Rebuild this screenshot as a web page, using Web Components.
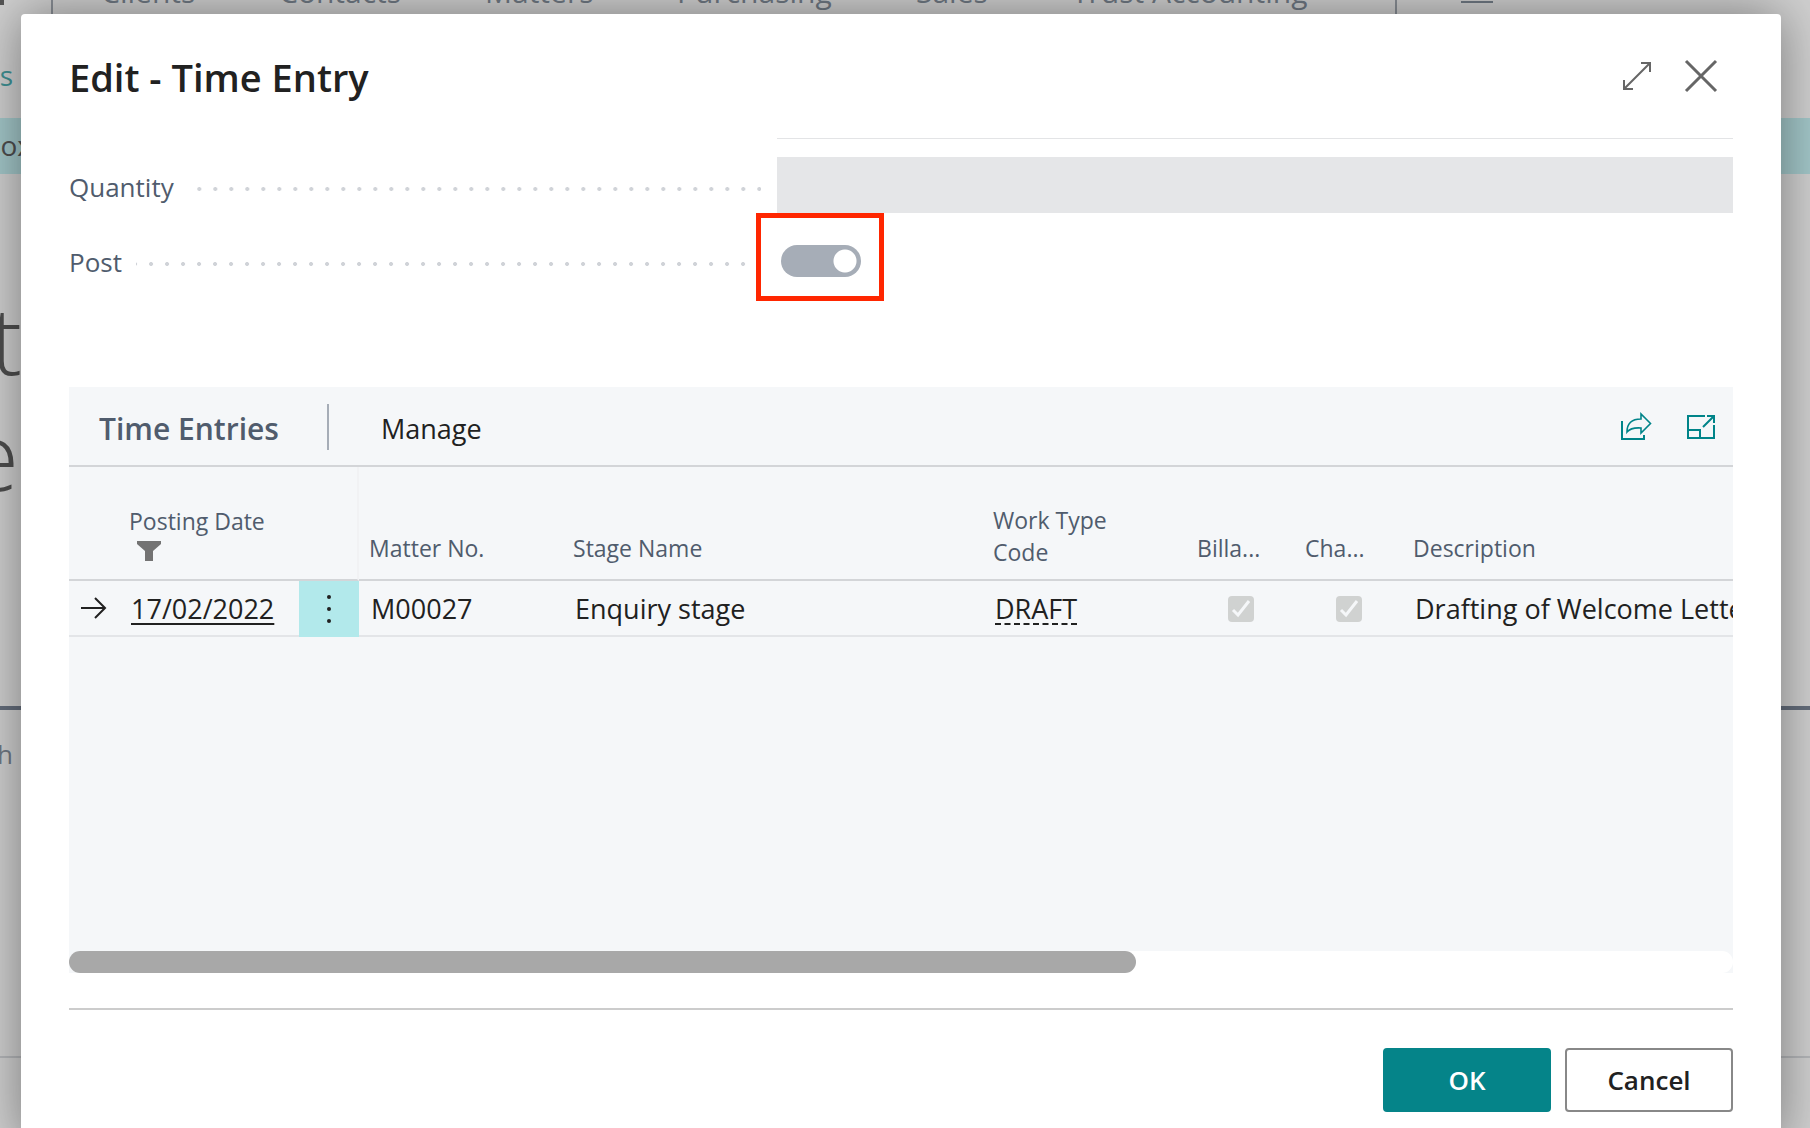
<!DOCTYPE html>
<html lang="en">
<head>
<meta charset="utf-8">
<title>Edit - Time Entry</title>
<style>
  html, body { height: 100%; }
  body {
    margin: 0;
    overflow: hidden;
    background: #d0d0d0;
    font-family: "Open Sans", "Noto Sans", sans-serif;
    font-size: 26px;
    line-height: 32px;
    color: #212121;
  }
</style>
</head>
<body>
<app-shell>
  <page-behind slot="page"></page-behind>
  <edit-dialog heading="Edit - Time Entry">
    <field-row label="Quantity" kind="text"></field-row>
    <field-row label="Post" kind="switch"></field-row>
    <time-entries slot="part"></time-entries>
    <dialog-button slot="actions" primary>OK</dialog-button>
    <dialog-button slot="actions">Cancel</dialog-button>
  </edit-dialog>
</app-shell>

<script>
const define = (name, html, setup) => {
  const template = document.createElement('template');
  template.innerHTML = html;
  customElements.define(name, class extends HTMLElement {
    constructor() {
      super();
      this.attachShadow({ mode: 'open' }).append(template.content.cloneNode(true));
    }
    connectedCallback() {
      if (setup) setup(this, this.shadowRoot);
    }
  });
};

define('app-shell', `
<style>
  :host { display: block; position: relative; height: 100vh; overflow: hidden; }
  .layer { position: absolute; inset: 0; padding: 14px 29px 0 21px; }
</style>
<slot name="page"></slot>
<div class="layer"><slot></slot></div>
`);

define('page-behind', `
<style>
  :host { display: flex; flex-direction: column; height: 100%; color: #4e4e4e; }
  nav { display: flex; height: 22px; align-items: flex-start; color: #6f7883; }
  nav .logo { width: 4px; height: 5px; background: #555; }
  nav .rule { width: 2px; height: 22px; background: #8a8f96; }
  nav .items { display: flex; margin: -24px 0 0 48px; font-size: 30px; }
  nav .logo + .rule { margin-left: 47px; }
  nav a { color: inherit; text-decoration: none; white-space: nowrap; }
  nav a:nth-child(1) { width: 178px; }
  nav a:nth-child(2) { width: 206px; }
  nav a:nth-child(3) { width: 192px; }
  nav a:nth-child(4) { width: 239px; }
  nav a:nth-child(5) { width: 156px; }
  nav a:nth-child(6) { width: 323px; }
  nav .menu { width: 32px; height: 2px; margin: 1px 0 0 64px; background: #6f7883; }
  .edge { display: flex; justify-content: flex-end; width: 13px; white-space: nowrap; }
  .link { box-sizing: border-box; height: 96px; padding-top: 32px; line-height: 42px; font-size: 28px; color: #3f9194; }
  .strip { height: 56px; background: #a3c7c9; }
  .strip .edge { width: 32px; line-height: 54px; font-size: 28px; }
  .hero { font-size: 94px; font-weight: 300; line-height: 116px; }
  .hero.first { margin-top: 107px; width: 22px; }
  .hero.second { width: 19px; }
  .bar { height: 4px; margin-top: 193px; background: #656e7c; }
  .cell { color: #6f7883; padding-top: 28px; }
  .line { height: 2px; margin-top: 286px; background: #b4b6b9; }
</style>
<nav>
  <span class="logo"></span><span class="rule"></span>
  <div class="items">
    <a href="#">Clients</a><a href="#">Contacts</a><a href="#">Matters</a><a href="#">Purchasing</a><a href="#">Sales</a><a href="#">Trust Accounting</a>
  </div>
  <span class="rule"></span><span class="menu"></span>
</nav>
<div class="edge link">s</div>
<div class="strip"><div class="edge">box</div></div>
<div class="edge hero first">t</div>
<div class="edge hero second">e</div>
<div class="bar"></div>
<div class="edge cell">h</div>
<div class="line"></div>
`);

define('edit-dialog', `
<style>
  :host {
    display: block; box-sizing: border-box; padding: 0 48px 32px;
    background: #fff; border-radius: 4px; box-shadow: 0 0 52px rgba(0,0,0,.43);
  }
  header { display: flex; align-items: center; justify-content: space-between; height: 124px; box-sizing: border-box; padding: 0 14px 0 0; }
  h1 { margin: 2px 0 0; font-size: 38px; line-height: 52px; font-weight: 600; }
  .tools { display: flex; gap: 28px; align-items: center; }
  button { display: block; padding: 0; border: 0; background: none; line-height: 0; }
  .clipped { display: grid; grid-template-columns: 177fr 239fr; }
  .clipped i { grid-column: 2; height: 1px; background: #e3e4e6; }
  .fields { display: flex; flex-direction: column; gap: 19px; padding: 18px 0 99px; }
  footer { display: flex; justify-content: flex-end; gap: 14px; margin-top: 35px; padding-top: 38px; border-top: 2px solid #ccc; }
</style>
<header>
  <h1></h1>
  <div class="tools">
    <button aria-label="Expand"><svg width="36" height="36" viewBox="0 0 36 36" fill="none" stroke="#666" stroke-width="2"><path d="M5 31 31 5M22 5h9v9M5 22v9h9"/></svg></button>
    <button aria-label="Close"><svg width="36" height="36" viewBox="0 0 36 36" fill="none" stroke="#666" stroke-width="3"><path d="M3 3 33 33M33 3 3 33"/></svg></button>
  </div>
</header>
<div class="clipped"><i></i></div>
<div class="fields"><slot></slot></div>
<slot name="part"></slot>
<footer><slot name="actions"></slot></footer>
`, (host, root) => { root.querySelector('h1').textContent = host.getAttribute('heading'); });

define('field-row', `
<style>
  :host { display: grid; grid-template-columns: 177fr 239fr; height: 56px; align-items: center; }
  .caption { display: flex; align-items: center; gap: 14px; padding-right: 16px; color: #505c6d; }
  label { padding-top: 4px; }
  .leader { flex: 1; height: 4px; margin-top: 8px; background: radial-gradient(circle at 14px 2px, #d0d3d8 1.6px, transparent 2.3px) right 0 top 0 / 16px 4px; }
  input { box-sizing: border-box; margin: 0; border: 0; border-radius: 0; font: inherit; }
  input[type=text] { display: block; width: 100%; height: 56px; padding: 0 12px; background: #e5e6e8; }
  .toggle { position: relative; width: 80px; height: 32px; margin: 2px 0 0 4px; }
  .toggle input { display: block; appearance: none; width: 80px; height: 32px; border-radius: 16px; background: radial-gradient(circle at 64px 16px, #fff 11px, transparent 12px) #a6adb7; }
  .marker { position: absolute; inset: -32px -23px -24px -25px; border: 5px solid #ff2600; pointer-events: none; }
</style>
<div class="caption"><label for="control"></label><span class="leader"></span></div>
<div class="control"></div>
`, (host, root) => {
  root.querySelector('label').textContent = host.getAttribute('label');
  root.querySelector('.control').innerHTML = host.getAttribute('kind') === 'switch'
    ? '<div class="toggle"><input id="control" type="checkbox" role="switch" checked><span class="marker"></span></div>'
    : '<input id="control" type="text" readonly>';
});

define('time-entries', `
<style>
  :host { display: block; background: #f5f7f9; font-size: 27px; }
  header { display: flex; align-items: center; height: 78px; padding: 0 15px 0 30px; border-bottom: 2px solid #d3d5d8; }
  h2 { margin: 6px 0 0; width: 228px; font-size: 30px; line-height: 36px; font-weight: 600; color: #505c6d; }
  .rule { width: 2px; height: 46px; margin-top: 2px; background: #a6adb7; }
  button { padding: 0; border: 0; background: none; font: inherit; color: inherit; }
  .manage { margin: 6px auto 0 52px; }
  .icons { display: flex; gap: 31px; margin-top: 2px; }
  .icons button { display: block; line-height: 0; }
  .scroll { overflow: hidden; height: 484px; }
  table { width: 100%; table-layout: fixed; border-collapse: separate; border-spacing: 0; }
  th, td { padding: 0; box-sizing: border-box; text-align: left; font-weight: 400; white-space: nowrap; }
  th { height: 114px; padding: 0 10px 15px; vertical-align: bottom; border-bottom: 2px solid #d3d5d8; font-size: 23px; color: #505c6d; }
  th.two { padding-bottom: 11px; white-space: normal; }
  th.cut { overflow: hidden; text-overflow: ellipsis; }
  th.first { padding: 0 0 18px 60px; border-right: 2px solid #f1f2f4; }
  th.first svg { display: block; margin: 4px 0 0 8px; }
  td { height: 56px; padding: 2px 12px 0; border-bottom: 2px solid #e3e5e8; }
  td a { color: inherit; text-underline-offset: 4px; text-decoration-thickness: 2px; }
  td.date { padding: 2px 0 0 10px; }
  td.more { padding: 2px 0 0; background: #b2e9eb; border-bottom-color: #b2e9eb; }
  td.more button { display: block; margin: auto; line-height: 0; }
  td.work a { text-decoration: none; border-bottom: 2px dashed #212121; display: inline-block; line-height: 28px; }
  td.check { text-align: center; line-height: 0; }
  td.check input { appearance: none; margin: 0; width: 26px; height: 26px; border-radius: 4px; background: #d0d2d1; vertical-align: top; }
  .box { position: relative; display: inline-block; width: 26px; height: 26px; }
  .box svg { position: absolute; inset: 0; pointer-events: none; }
  td.desc { padding-right: 0; }
  .track { height: 22px; border-radius: 11px; background: #fff; }
  .thumb { width: 64.1%; height: 22px; border-radius: 11px; background: #a8a8a8; }
</style>
<header>
  <h2>Time Entries</h2><span class="rule"></span>
  <button class="manage">Manage</button>
  <div class="icons">
    <button aria-label="Share"><svg width="34" height="34" viewBox="0 0 34 34" fill="none" stroke="#008489" stroke-width="2"><path d="M3 11v18h22v-4"/><path stroke-width="1.6" d="M8 22C8 13 13 9 22 9V4l9.500 9.500L22 23v-5C15 17.500 11 18.500 8 22z"/></svg></button>
    <button aria-label="Open in full view"><svg width="34" height="34" viewBox="0 0 34 34" fill="none" stroke="#008489" stroke-width="2"><path d="M21 6H4v22h26V15M4 20h12v8M23 6h7v7M29 7 19 17"/></svg></button>
  </div>
</header>
<div class="scroll">
<table>
  <colgroup><col style="width:52px"><col style="width:178px"><col style="width:60px"><col style="width:204px"><col style="width:420px"><col style="width:204px"><col style="width:108px"><col style="width:108px"><col></colgroup>
  <thead><tr>
    <th class="first" colspan="3">Posting Date<svg width="24" height="20" viewBox="0 0 24 20" fill="#737373"><path d="M0 0h24v3l-8 7v10H8V10L0 3z"/></svg></th>
    <th>Matter No.</th><th>Stage Name</th><th class="two">Work Type<br>Code</th>
    <th class="cut">Billa...</th><th class="cut">Cha...</th><th>Description</th>
  </tr></thead>
  <tbody><tr>
    <td><svg width="26" height="22" viewBox="0 0 26 22" fill="none" stroke="#212121" stroke-width="2"><path d="M0 11h24M14 1l10 10-10 10"/></svg></td>
    <td class="date"><a href="#">17/02/2022</a></td>
    <td class="more"><button aria-label="Show more options"><svg width="60" height="30" viewBox="0 0 60 30" fill="#212121"><circle cx="30" cy="3" r="2"/><circle cx="30" cy="15" r="2"/><circle cx="30" cy="27" r="2"/></svg></button></td>
    <td>M00027</td><td>Enquiry stage</td><td class="work"><a href="#">DRAFT</a></td>
    <td class="check"><span class="box"><input type="checkbox" aria-label="Billable" checked disabled><svg viewBox="0 0 26 26" fill="none" stroke="#f5f7f9" stroke-width="3"><path d="m5 14 5 5L21 5"/></svg></span></td>
    <td class="check"><span class="box"><input type="checkbox" aria-label="Chargeable" checked disabled><svg viewBox="0 0 26 26" fill="none" stroke="#f5f7f9" stroke-width="3"><path d="m5 14 5 5L21 5"/></svg></span></td>
    <td class="desc">Drafting of Welcome Letter</td>
  </tr></tbody>
</table>
</div>
<div class="track"><div class="thumb"></div></div>
`);

define('dialog-button', `
<style>
  :host { display: block; width: 168px; }
  button { box-sizing: border-box; width: 100%; height: 64px; padding: 0; border: 2px solid #888; border-radius: 4px; background: #fff; color: #212121; font: inherit; font-weight: 600; }
  :host([primary]) button { border-color: #058489; background: #058489; color: #fff; }
</style>
<button><slot></slot></button>
`);
</script>
</body>
</html>
